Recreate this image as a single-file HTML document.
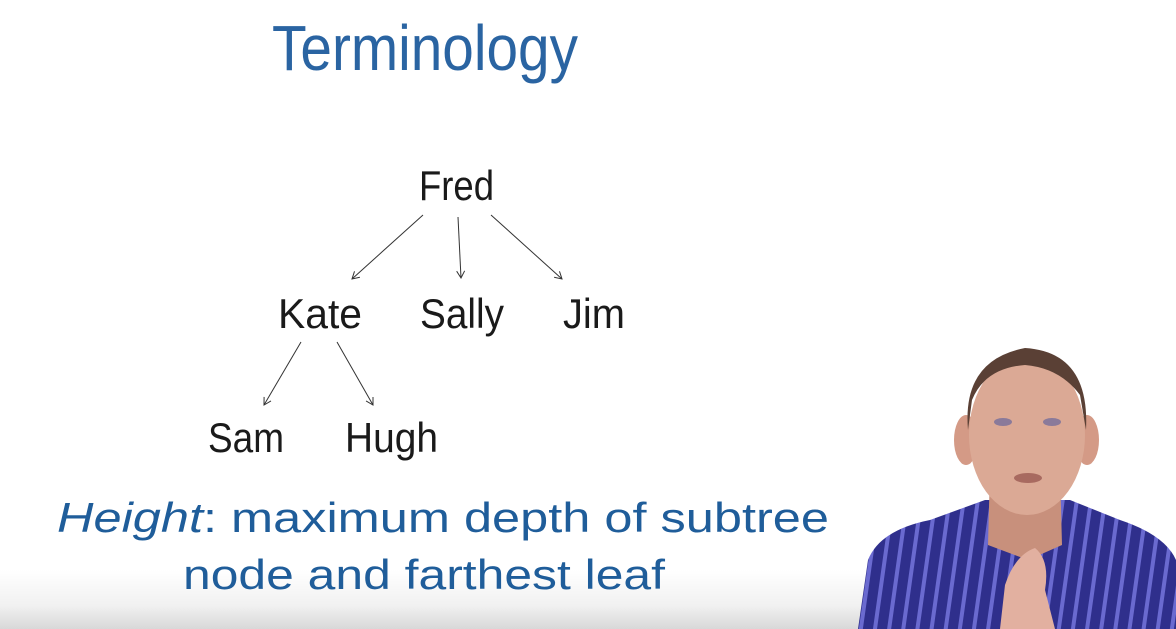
<!DOCTYPE html>
<html><head><meta charset="utf-8"><style>
html,body{margin:0;padding:0;width:1176px;height:629px;overflow:hidden;background:#fff}
</style></head><body>
<svg width="1176" height="629" viewBox="0 0 1176 629" xmlns="http://www.w3.org/2000/svg">
<defs>
<linearGradient id="g" x1="0" y1="0" x2="0" y2="1">
<stop offset="0" stop-color="#fff"/><stop offset="0.6" stop-color="#f1f1f1"/><stop offset="1" stop-color="#d8d8d8"/>
</linearGradient>
<pattern id="st" width="14" height="20" patternUnits="userSpaceOnUse" patternTransform="rotate(8)">
<rect width="14" height="20" fill="#2f2f8c"/><rect x="0" width="4" height="20" fill="#6a6ad0"/>
</pattern>
<marker id="a" markerWidth="10" markerHeight="10" refX="8" refY="5" orient="auto" markerUnits="userSpaceOnUse">
<path d="M1,1 L8,5 L1,9" fill="none" stroke="#333" stroke-width="1"/>
</marker>
</defs>
<rect x="0" y="570" width="1176" height="59" fill="url(#g)"/>
<g font-family="Liberation Sans, sans-serif">
<text x="272" y="70" font-size="64" fill="#2a64a2" textLength="306" lengthAdjust="spacingAndGlyphs">Terminology</text>
<g fill="#1a1a1a" font-size="42">
<text x="419" y="200" textLength="75" lengthAdjust="spacingAndGlyphs">Fred</text>
<text x="278" y="328" textLength="84" lengthAdjust="spacingAndGlyphs">Kate</text>
<text x="420" y="328" textLength="84" lengthAdjust="spacingAndGlyphs">Sally</text>
<text x="563" y="328" textLength="62" lengthAdjust="spacingAndGlyphs">Jim</text>
<text x="208" y="452" textLength="76" lengthAdjust="spacingAndGlyphs">Sam</text>
<text x="345" y="452" textLength="93" lengthAdjust="spacingAndGlyphs">Hugh</text>
</g>
<g fill="#1f5d9a" font-size="42">
<text x="57" y="532" textLength="772" lengthAdjust="spacingAndGlyphs"><tspan font-style="italic">Height</tspan>: maximum depth of subtree</text>
<text x="183" y="589" textLength="482" lengthAdjust="spacingAndGlyphs">node and farthest leaf</text>
</g>
</g>
<g stroke="#333" stroke-width="1" marker-end="url(#a)">
<line x1="423" y1="215" x2="352" y2="279"/>
<line x1="458" y1="217" x2="461" y2="278"/>
<line x1="491" y1="215" x2="562" y2="279"/>
<line x1="301" y1="342" x2="264" y2="405"/>
<line x1="337" y1="342" x2="373" y2="405"/>
</g>
<!-- person -->
<path d="M858,629 L868,560 Q880,530 930,520 L985,500 L1070,500 L1120,520 Q1165,535 1176,560 L1176,629 Z" fill="url(#st)"/>
<path d="M990,470 L1060,470 L1062,545 L1028,560 L988,545 Z" fill="#c8907c"/>
<ellipse cx="966" cy="440" rx="12" ry="25" fill="#d49a86"/>
<ellipse cx="1087" cy="440" rx="12" ry="25" fill="#d49a86"/>
<ellipse cx="1027" cy="435" rx="58" ry="80" fill="#dba995"/>
<path d="M968,430 Q962,360 1025,348 Q1090,352 1086,430 L1080,395 Q1060,368 1025,365 Q985,368 972,400 Z" fill="#5a4035"/>
<ellipse cx="1003" cy="422" rx="9" ry="4" fill="#8a7a9a"/>
<ellipse cx="1052" cy="422" rx="9" ry="4" fill="#8a7a9a"/>
<ellipse cx="1028" cy="478" rx="14" ry="5" fill="#a86a60"/>
<path d="M1000,629 L1005,585 Q1015,555 1035,548 Q1050,560 1045,590 L1055,629 Z" fill="#e2b0a0"/>
</svg>
</body></html>
